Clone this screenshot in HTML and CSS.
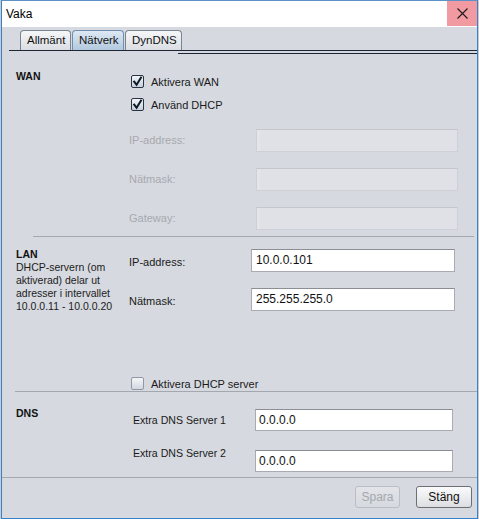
FILE: index.html
```html
<!DOCTYPE html>
<html lang="sv">
<head>
<meta charset="utf-8">
<title>Vaka</title>
<link rel="stylesheet" href="styles.css">
</head>
<body>
<div class="window">
  <div class="titlebar">
    <span class="title">Vaka</span>
    <div class="close">
      <svg width="11" height="11" viewBox="0 0 11 11"><path d="M0.5 0.5 L10.5 10.5 M10.5 0.5 L0.5 10.5" stroke="#1b1b1b" stroke-width="1.1" fill="none"/></svg>
    </div>
  </div>
  <div class="body">
    <div class="tabstrip">
      <div class="tab">Allmänt</div>
      <div class="tab active">Nätverk</div>
      <div class="tab">DynDNS</div>
    </div>
    <div class="tabline"></div>

    <div class="panel">
      <section class="sec wan">
        <div class="sec-head"><div class="head">WAN</div></div>
        <div class="sec-body">
          <div class="check-row">
            <span class="cb checked"><svg width="13" height="13" viewBox="0 0 13 13"><path d="M3.2 6.6 L5.6 9.8 L10 2.6" stroke="#101a26" stroke-width="2" fill="none" stroke-linecap="square"/></svg></span>
            <span>Aktivera WAN</span>
          </div>
          <div class="check-row">
            <span class="cb checked"><svg width="13" height="13" viewBox="0 0 13 13"><path d="M3.2 6.6 L5.6 9.8 L10 2.6" stroke="#101a26" stroke-width="2" fill="none" stroke-linecap="square"/></svg></span>
            <span>Använd DHCP</span>
          </div>
          <div class="field first disabled">
            <span class="flabel">IP-address:</span>
            <div class="input"></div>
          </div>
          <div class="field disabled">
            <span class="flabel">Nätmask:</span>
            <div class="input"></div>
          </div>
          <div class="field disabled">
            <span class="flabel">Gateway:</span>
            <div class="input"></div>
          </div>
        </div>
      </section>
      <div class="sep sep-wan"></div>

      <section class="sec lan">
        <div class="sec-head">
          <div class="head">LAN</div>
          <div class="desc">DHCP-servern (om<br>aktiverad) delar ut<br>adresser i intervallet<br>10.0.0.11 - 10.0.0.20</div>
        </div>
        <div class="sec-body">
          <div class="field">
            <span class="flabel">IP-address:</span>
            <div class="input">10.0.0.101</div>
          </div>
          <div class="field">
            <span class="flabel">Nätmask:</span>
            <div class="input">255.255.255.0</div>
          </div>
          <div class="check-row dhcp">
            <span class="cb"></span>
            <span>Aktivera DHCP server</span>
          </div>
        </div>
      </section>
      <div class="sep sep-lan"></div>

      <section class="sec dns">
        <div class="sec-head"><div class="head">DNS</div></div>
        <div class="sec-body">
          <div class="field">
            <span class="flabel">Extra DNS Server 1</span>
            <div class="input">0.0.0.0</div>
          </div>
          <div class="field second">
            <span class="flabel">Extra DNS Server 2</span>
            <div class="input">0.0.0.0</div>
          </div>
        </div>
      </section>
      <div class="sep sep-dns"></div>
    </div>

    <div class="footer">
      <button class="btn btn-save" disabled>Spara</button>
      <button class="btn btn-close">Stäng</button>
    </div>
  </div>
</div>
</body>
</html>
```

FILE: styles.css
```css
html, body {
  margin: 0;
  padding: 0;
  background: #c9cdd3;
}

body {
  font-family: "Liberation Sans", Arial, sans-serif;
  font-size: 11px;
  color: #1a1a1a;
}

.window {
  margin-left: 1px;
  width: 475px;
  height: 517px;
  border: 1px solid #3a80c6;
  border-top-color: #5c92c8;
  display: flex;
  flex-direction: column;
  background: #d6d9e0;
}

.titlebar {
  height: 26px;
  flex: none;
  background: #ffffff;
  display: flex;
  align-items: flex-start;
  justify-content: space-between;
}

.title {
  font-size: 12px;
  line-height: 26px;
  padding-left: 4px;
  color: #000;
}

.close {
  width: 30px;
  height: 25px;
  background: #f19aa1;
  display: flex;
  align-items: center;
  justify-content: center;
}

.body {
  flex: 1;
  display: flex;
  flex-direction: column;
}

.tabstrip {
  margin-left: 7px;
  padding-left: 11px;
  padding-top: 3px;
  display: flex;
  gap: 1px;
  border-bottom: 1px solid #1d2733;
}

.tab {
  height: 19px;
  line-height: 19px;
  font-size: 11.5px;
  color: #111;
  border: 1px solid #7b8591;
  border-bottom: none;
  border-radius: 4px 4px 0 0;
  background: linear-gradient(#f6f7f9, #dadde2);
  padding: 0 6px;
}

.tab:nth-child(1) { width: 37px; }
.tab:nth-child(2) { width: 38px; }
.tab:nth-child(3) { width: 43px; margin-left: 0; }

.tab.active {
  border-color: #6f8fb0;
  background: linear-gradient(#dde8f3, #b3c9de);
}

.tabline {
  margin-left: 176px;
  margin-top: 2px;
  border-top: 1px solid #1d2733;
}

.panel {
  display: flex;
  flex-direction: column;
}

.sec {
  display: grid;
  grid-template-columns: 113px 1fr;
  padding-left: 14px;
}

.head {
  font-weight: bold;
  font-size: 10.5px;
  line-height: 13px;
  color: #111;
}

.desc {
  font-size: 10.5px;
  line-height: 13px;
  color: #1c1c1c;
}

.sec-body {
  display: flex;
  flex-direction: column;
}

.check-row {
  height: 23px;
  display: flex;
  align-items: center;
  gap: 7px;
  padding-left: 2px;
  font-size: 11px;
}

.cb {
  width: 11px;
  height: 11px;
  border: 1px solid #7e8996;
  border-radius: 2px;
  background: linear-gradient(#f7f8fa, #d8dde4);
  position: relative;
  flex: none;
}

.cb.checked {
  border-color: #2a3440;
  background: linear-gradient(#f2f5f9, #c7d1dd);
}

.cb svg {
  position: absolute;
  left: -1px;
  top: -1px;
}

.field {
  display: flex;
  align-items: center;
  height: 23px;
  margin-top: 16px;
}

.flabel {
  font-size: 11px;
  line-height: 13px;
  flex: none;
}

.input {
  box-sizing: border-box;
  height: 100%;
  background: #ffffff;
  border: 1px solid #a8abb1;
  border-top-color: #8b8e94;
  font-size: 12px;
  line-height: 21px;
  padding-left: 4px;
  color: #111;
}

/* WAN */
.wan {
  padding-top: 16px;
  padding-bottom: 6px;
}

.wan .field.first {
  margin-top: 13px;
}

.wan .flabel {
  width: 127px;
}

.wan .input {
  width: 202px;
}

.field.disabled .flabel {
  color: #a6a9ae;
}

.field.disabled .input {
  background: #dfe1e6;
  border: 1px solid #cdd0d6;
  border-top-color: #c3c6cc;
  box-shadow: inset 3px 0 0 #e3e5e9;
}

.sep {
  height: 0;
  border-top: 1px solid #a3a7ae;
}

.sep-wan {
  margin-left: 31px;
  margin-right: 3px;
}

/* LAN */
.lan {
  padding-top: 12px;
}

.lan .sec-head {
  margin-top: -1px;
}

.lan .field:first-child {
  margin-top: 0;
}

.lan .flabel {
  width: 122px;
  margin-top: 3px;
}

.lan .input {
  width: 204px;
}

.check-row.dhcp {
  height: 15px;
  margin-top: 65px;
}

.cb:not(.checked) {
  border-color: #8f99a5;
  background: linear-gradient(#f4f5f8, #d3d8df);
}

.sep-lan {
  margin-left: 13px;
}

/* DNS */
.dns {
  padding-top: 17px;
  padding-bottom: 5px;
}

.dns .sec-head {
  margin-top: -2px;
}

.dns .field {
  height: 22px;
  margin-top: 19px;
  padding-left: 4px;
}

.dns .field:first-child {
  margin-top: 0;
}

.dns .flabel {
  width: 122px;
  font-size: 10.6px;
}

.dns .field.second {
  align-items: flex-start;
}

.dns .field.second .flabel {
  margin-top: -3px;
}

.dns .input {
  width: 198px;
  padding-left: 3px;
  line-height: 20px;
}

/* Footer */
.footer {
  display: flex;
  justify-content: flex-end;
  gap: 16px;
  padding-top: 8px;
  padding-right: 5px;
}

.btn {
  box-sizing: border-box;
  height: 22px;
  font-family: "Liberation Sans", Arial, sans-serif;
  font-size: 12px;
  border-radius: 3px;
  padding: 0;
}

.btn-save {
  width: 45px;
  color: #a4a8ae;
  border: 1px solid #b9bdc4;
  background: linear-gradient(#e2e4e8, #d6d9df);
}

.btn-close {
  width: 56px;
  color: #111;
  border: 1px solid #6c6f74;
  background: linear-gradient(#fbfbfc, #dcdee2);
}
```
